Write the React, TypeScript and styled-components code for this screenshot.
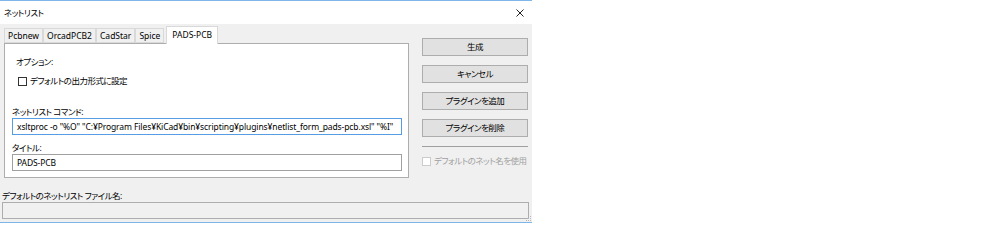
import styled, { createGlobalStyle } from "styled-components";

const GlobalStyle = createGlobalStyle`
    html, body {
        margin: 0;
        padding: 0;
        background: #ffffff;
    }
    body {
        font-family: "Noto Sans", "Noto Sans CJK JP", sans-serif;
        font-size: 8.5px;
        color: #000;
        font-feature-settings: "palt";
    }
`;

const tabs = ["Pcbnew", "OrcadPCB2", "CadStar", "Spice", "PADS-PCB"];
const buttons = ["生成", "キャンセル", "プラグインを追加", "プラグインを削除"];

export default function App() {
    return (
        <>
            <GlobalStyle />
            <Window>
                <TitleBar>
                    <Title>ネットリスト</Title>
                    <CloseButton>
                        <svg width="8" height="8" viewBox="0 0 8 8">
                            <path d="M0.5 0.5 L7.5 7.5 M7.5 0.5 L0.5 7.5" stroke="#222" strokeWidth="1" />
                        </svg>
                    </CloseButton>
                </TitleBar>

                <Body>
                    <MainRow>
                        <TabArea>
                            <TabStrip>
                                {tabs.map((t) => (
                                    <Tab key={t} $active={t === "PADS-PCB"}>{t}</Tab>
                                ))}
                            </TabStrip>
                            <Panel>
                                <GroupLabel>オプション:</GroupLabel>
                                <CheckRow $indent={6}>
                                    <CheckBox />
                                    <span>デフォルトの出力形式に設定</span>
                                </CheckRow>
                                <FieldLabel $top={19}>ネットリスト コマンド:</FieldLabel>
                                <TextInput
                                    $focused
                                    readOnly
                                    value={'xsltproc -o "%O" "C:¥Program Files¥KiCad¥bin¥scripting¥plugins¥netlist_form_pads-pcb.xsl" "%I"'}
                                />
                                <FieldLabel $top={7}>タイトル:</FieldLabel>
                                <TextInput readOnly value="PADS-PCB" />
                            </Panel>
                        </TabArea>

                        <ButtonColumn>
                            {buttons.map((b) => (
                                <Button key={b}>{b}</Button>
                            ))}
                            <Separator />
                            <CheckRow $disabled>
                                <CheckBox $disabled />
                                <span>デフォルトのネット名を使用</span>
                            </CheckRow>
                        </ButtonColumn>
                    </MainRow>

                    <FieldLabel $top={12}>デフォルトのネットリスト ファイル名:</FieldLabel>
                    <TextInput $wide $disabled readOnly value="" />
                </Body>

                <Grip>
                    <svg width="7" height="7" viewBox="0 0 7 7">
                        <rect x="5" y="1" width="1" height="1" fill="#b8b8b8" />
                        <rect x="3" y="3" width="1" height="1" fill="#b8b8b8" />
                        <rect x="5" y="3" width="1" height="1" fill="#b8b8b8" />
                        <rect x="1" y="5" width="1" height="1" fill="#b8b8b8" />
                        <rect x="3" y="5" width="1" height="1" fill="#b8b8b8" />
                        <rect x="5" y="5" width="1" height="1" fill="#b8b8b8" />
                    </svg>
                </Grip>
            </Window>
        </>
    );
}

// Japanese labels render a bit wider than the Windows UI font, so they get tightened
const jpTight = `letter-spacing: -0.5px;`;

const Window = styled.div`
    position: relative;
    width: 532px;
    border-top: 1px solid #7fb6ea;
    border-bottom: 1px solid #7fb6ea;
    box-sizing: border-box;
`;

const TitleBar = styled.div`
    height: 23px;
    background: #ffffff;
    display: flex;
    align-items: center;
    justify-content: space-between;
    padding: 0 6px 0 4px;
`;

const Title = styled.span`
    line-height: 12px;
    ${jpTight}
`;

const CloseButton = styled.span`
    display: flex;
    align-items: center;
    justify-content: center;
    width: 12px;
    height: 12px;
`;

const Body = styled.div`
    background: #f0f0f0;
    height: 198px;
    box-sizing: border-box;
    padding: 2px 2px 0 2px;
    display: flex;
    flex-direction: column;
`;

const MainRow = styled.div`
    display: flex;
    flex-direction: row;
    align-items: flex-start;
`;

const TabArea = styled.div`
    margin-left: 2px;
    width: 405px;
    display: flex;
    flex-direction: column;
`;

const TabStrip = styled.div`
    display: flex;
    flex-direction: row;
    align-items: flex-end;
    height: 17px;
    position: relative;
    z-index: 1;
`;

const Tab = styled.div<{ $active?: boolean }>`
    box-sizing: border-box;
    height: ${(p) => (p.$active ? "18px" : "15px")};
    margin-bottom: ${(p) => (p.$active ? "-1px" : "0")};
    margin-left: ${(p) => (p.$active ? "2px" : "0")};
    padding: 0 ${(p) => (p.$active ? "5px" : "3px")};
    padding-top: ${(p) => (p.$active ? "2px" : "0")};
    background: ${(p) => (p.$active ? "#ffffff" : "#f0f0f0")};
    border: 1px solid #d9d9d9;
    border-bottom: ${(p) => (p.$active ? "none" : "1px solid #d9d9d9")};
    & + & {
        border-left: ${(p) => (p.$active ? "1px solid #d9d9d9" : "none")};
    }
    display: flex;
    align-items: ${(p) => (p.$active ? "flex-start" : "center")};
    line-height: 12px;
    white-space: nowrap;
`;

const Panel = styled.div`
    box-sizing: border-box;
    height: 135px;
    background: #ffffff;
    border: 1px solid #adadad;
    padding: 0 6px 0 7px;
    display: flex;
    flex-direction: column;
`;

const GroupLabel = styled.div`
    margin-top: 12px;
    margin-left: 4px;
    line-height: 12px;
    ${jpTight}
`;

const CheckRow = styled.div<{ $indent?: number; $disabled?: boolean }>`
    display: flex;
    align-items: center;
    gap: 3px;
    height: 12px;
    margin-top: 7px;
    margin-left: ${(p) => p.$indent ?? 0}px;
    color: ${(p) => (p.$disabled ? "#a0a0a0" : "#000")};
    line-height: 12px;
    white-space: nowrap;
    ${jpTight}
`;

const CheckBox = styled.span<{ $disabled?: boolean }>`
    display: inline-block;
    flex-shrink: 0;
    box-sizing: border-box;
    width: 9px;
    height: 9px;
    background: #ffffff;
    border: 1px solid ${(p) => (p.$disabled ? "#cccccc" : "#333333")};
`;

const FieldLabel = styled.div<{ $top: number }>`
    margin-top: ${(p) => p.$top}px;
    line-height: 12px;
    white-space: nowrap;
    ${jpTight}
`;

const TextInput = styled.input<{ $focused?: boolean; $disabled?: boolean; $wide?: boolean }>`
    box-sizing: border-box;
    width: ${(p) => (p.$wide ? "527px" : "100%")};
    height: 17px;
    margin: 0;
    padding: 0 2px 0 4px;
    font: inherit;
    letter-spacing: -0.1px;
    color: #000;
    outline: none;
    border: 1px solid ${(p) => (p.$focused ? "#569de5" : p.$disabled ? "#adadad" : "#a0a0a0")};
    background: ${(p) => (p.$disabled ? "#f0f0f0" : "#ffffff")};
`;

const ButtonColumn = styled.div`
    margin-left: 13px;
    width: 106px;
    padding-top: 12px;
    display: flex;
    flex-direction: column;
    gap: 9px;

    & > div {
        margin-top: 0;
    }
`;

const Button = styled.div`
    box-sizing: border-box;
    height: 18px;
    background: #e1e1e1;
    border: 1px solid #adadad;
    display: flex;
    align-items: center;
    justify-content: center;
    line-height: 12px;
    ${jpTight}
`;

const Separator = styled.div`
    height: 1px;
    background: #a0a0a0;
    margin-top: -2px;
    margin-bottom: -1px;
`;

const Grip = styled.div`
    position: absolute;
    right: 0;
    bottom: 0;
    width: 7px;
    height: 7px;
    display: flex;
`;
